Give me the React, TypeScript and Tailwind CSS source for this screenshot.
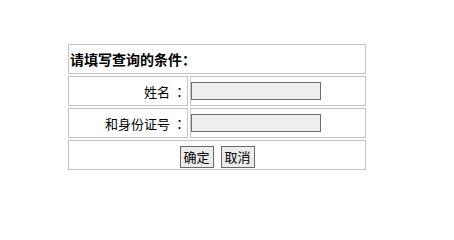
import { useState } from 'react'

const font = { fontFamily: '"Noto Sans CJK SC", "Noto Sans", sans-serif' }
// 全角冒号居中显示
const colonFont = { fontFamily: '"Noto Sans CJK TC", "Noto Sans", sans-serif' }

function App() {
  const [name, setName] = useState('')
  const [idNo, setIdNo] = useState('')

  // 取消：清空输入
  const handleReset = () => {
    setName('')
    setIdNo('')
  }

  return (
    <div className="w-[454px] h-[224px] bg-white text-black" style={font}>
      <div className="ml-[68px] pt-[44px] grid grid-cols-[120px_176px] gap-[2px]">
        {/* 标题 */}
        <div className="col-span-2 h-[30px] border border-[#c4c4c4] flex items-center px-[1px]">
          <span className="text-[14px] font-bold leading-none">请填写查询的条件：</span>
        </div>

        {/* 姓名 */}
        <div className="h-[30px] border border-[#c4c4c4] flex items-center justify-end pr-[1px]">
          <span className="text-[13px] leading-none">
            姓名 <span style={colonFont}>：</span>
          </span>
        </div>
        <div className="h-[30px] border border-[#c4c4c4] flex items-center">
          <input
            value={name}
            onChange={(e) => setName(e.target.value)}
            className="w-[130px] h-[18px] border border-[#6f6f6f] bg-[#eeeeee] outline-none text-[12px] px-[2px]"
          />
        </div>

        {/* 身份证号 */}
        <div className="h-[30px] border border-[#c4c4c4] flex items-center justify-end pr-[1px]">
          <span className="text-[13px] leading-none">
            和身份证号 <span style={colonFont}>：</span>
          </span>
        </div>
        <div className="h-[30px] border border-[#c4c4c4] flex items-center">
          <input
            value={idNo}
            onChange={(e) => setIdNo(e.target.value)}
            className="w-[130px] h-[18px] border border-[#6f6f6f] bg-[#eeeeee] outline-none text-[12px] px-[2px]"
          />
        </div>

        {/* 按钮 */}
        <div className="col-span-2 h-[30px] border border-[#c4c4c4] flex items-center justify-center gap-[7px] pt-[3px]">
          <button
            type="button"
            className="w-[34px] h-[22px] border border-[#6a6a6a] bg-[#ececec] text-[13px] leading-none"
          >
            确定
          </button>
          <button
            type="button"
            onClick={handleReset}
            className="w-[34px] h-[22px] border border-[#6a6a6a] bg-[#ececec] text-[13px] leading-none"
          >
            取消
          </button>
        </div>
      </div>
    </div>
  )
}

export default App
